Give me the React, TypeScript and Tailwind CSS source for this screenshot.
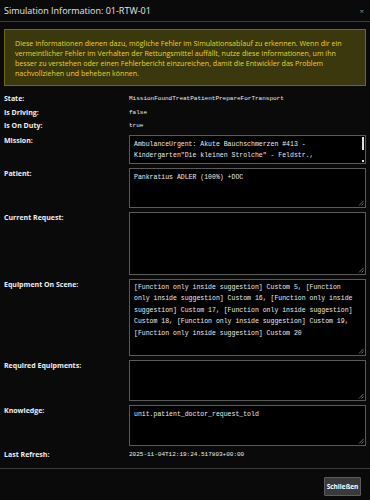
import React from 'react';

const sans = { fontFamily: '"Open Sans", "Noto Sans", sans-serif' };

function Grip() {
    return (
        <svg className="absolute right-[1px] bottom-[1px]" width="6" height="6" viewBox="0 0 6 6">
            <path d="M5.5 1 L1 5.5 M5.5 3.5 L3.5 5.5" stroke="#8a8a8a" strokeWidth="0.8" />
        </svg>
    );
}

function Box({ h, children, scroll }: { h: string; children?: React.ReactNode; scroll?: boolean }) {
    return (
        <div className={`relative ${h} border border-[#5a5a5a] bg-black pl-[4px] pr-[8px] pt-[2px] overflow-hidden font-['Liberation_Mono',monospace] text-[6.5px] leading-[11.5px] text-[#ececec]`}>
            {children}
            {scroll ? (
                <>
                    <div className="absolute right-[1px] top-[1px] w-[2px] h-[13px] bg-[#e0e0e0]" />
                    <div className="absolute right-[1px] bottom-[1px] w-[2px] h-[2px] bg-[#e0e0e0]" />
                </>
            ) : (
                <Grip />
            )}
        </div>
    );
}

function Label({ children }: { children: React.ReactNode }) {
    return <div className="text-[7px] font-bold text-[#f0f0f0] leading-[9.5px]" style={sans}>{children}</div>;
}

function TextRow({ label, value }: { label: string; value: string }) {
    return (
        <div className="grid grid-cols-[125px_1fr] h-[9.5px] items-center">
            <Label>{label}</Label>
            <div className="font-['Liberation_Mono',monospace] text-[6px] text-[#ececec] leading-[9.5px]">{value}</div>
        </div>
    );
}

function BoxRow({ label, h, children, scroll }: { label: string; h: string; children?: React.ReactNode; scroll?: boolean }) {
    return (
        <div className="grid grid-cols-[125px_1fr]">
            <div className="pt-[1px]"><Label>{label}</Label></div>
            <Box h={h} scroll={scroll}>{children}</Box>
        </div>
    );
}

export default function App() {
    return (
        <div className="w-[370px] h-[500px] bg-[#0a0a0a] flex flex-col overflow-hidden" style={sans}>
            <div className="h-[22px] border-b border-[#3c3c3c] flex items-center justify-between pl-[4px] pr-[6px]">
                <span className="text-[9px] text-[#e6e6e6]">Simulation Information: 01-RTW-01</span>
                <span className="text-[8px] text-[#8a8a8a]">×</span>
            </div>

            <div className="flex-1 pl-[4px] pr-[4px] pt-[7px]">
                <div className="border border-[#6e6a1e] bg-[#3a380c] pl-[10px] pr-[12px] pt-[8px] pb-[7px] text-[7.1px] leading-[10px] text-[#e8d42a]">
                    Diese Informationen dienen dazu, mögliche Fehler im Simulationsablauf zu erkennen. Wenn dir ein vermeintlicher Fehler im Verhalten der Rettungsmittel auffällt, nutze diese Informationen, um ihn besser zu verstehen oder einen Fehlerbericht einzureichen, damit die Entwickler das Problem nachvollziehen und beheben können.
                </div>

                <div className="flex flex-col gap-[4px] mt-[8px]">
                    <TextRow label="State:" value="MissionFoundTreatPatientPrepareForTransport" />
                    <TextRow label="Is Driving:" value="false" />
                    <TextRow label="Is On Duty:" value="true" />
                    <BoxRow label="Mission:" h="h-[29px]" scroll>
                        <div className="pt-[1px]">AmbulanceUrgent: Akute Bauchschmerzen #413 -<br />Kindergarten"Die kleinen Strolche" - Feldstr.,</div>
                    </BoxRow>
                    <BoxRow label="Patient:" h="h-[40px]">
                        <div className="pt-[1px]">Pankratius ADLER (100%) +DOC</div>
                    </BoxRow>
                    <BoxRow label="Current Request:" h="h-[63px]" />
                    <BoxRow label="Equipment On Scene:" h="h-[77px]">
                        [Function only inside suggestion] Custom 5, [Function only inside suggestion] Custom 16, [Function only inside suggestion] Custom 17, [Function only inside suggestion] Custom 18, [Function only inside suggestion] Custom 19, [Function only inside suggestion] Custom 20
                    </BoxRow>
                    <BoxRow label="Required Equipments:" h="h-[41px]" />
                    <BoxRow label="Knowledge:" h="h-[41px]">
                        <div className="pt-[1px]">unit.patient_doctor_request_told</div>
                    </BoxRow>
                    <TextRow label="Last Refresh:" value="2025-11-04T12:19:24.517803+00:00" />
                </div>
            </div>

            <div className="h-[32px] border-t border-[#3c3c3c] flex items-start justify-end pt-[8px] pr-[9px]">
                <button className="h-[19px] w-[37px] bg-[#3a3a3a] border border-[#5c5c5c] text-[6.5px] font-bold text-white rounded-[1px]">Schließen</button>
            </div>
        </div>
    );
}
